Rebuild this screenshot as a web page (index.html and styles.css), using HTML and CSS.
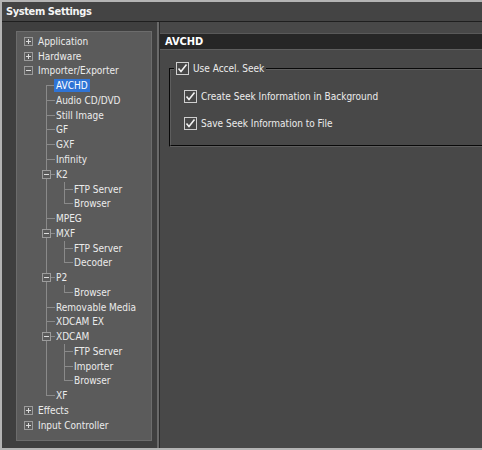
FILE: index.html
```html
<!DOCTYPE html>
<html>
<head>
<meta charset="utf-8">
<link rel="stylesheet" href="styles.css">
</head>
<body>
<div class="window">
  <div class="titlebar">System Settings</div>
  <div class="main">
    <div class="sidebar">
      <div class="tree">
        <div class="row"><span class="c"><span class="exp plus"></span></span><span class="lbl">Application</span></div>
        <div class="row"><span class="c"><span class="exp plus"></span></span><span class="lbl">Hardware</span></div>
        <div class="row"><span class="c"><span class="exp"></span></span><span class="lbl">Importer/Exporter</span></div>
        <div class="row"><span class="c"></span><span class="c f"></span><span class="lbl sel">AVCHD</span></div>
        <div class="row"><span class="c"></span><span class="c t"></span><span class="lbl">Audio CD/DVD</span></div>
        <div class="row"><span class="c"></span><span class="c t"></span><span class="lbl">Still Image</span></div>
        <div class="row"><span class="c"></span><span class="c t"></span><span class="lbl">GF</span></div>
        <div class="row"><span class="c"></span><span class="c t"></span><span class="lbl">GXF</span></div>
        <div class="row"><span class="c"></span><span class="c t"></span><span class="lbl">Infinity</span></div>
        <div class="row"><span class="c"></span><span class="c t"><span class="exp"></span></span><span class="lbl">K2</span></div>
        <div class="row"><span class="c"></span><span class="c v"></span><span class="c t"></span><span class="lbl">FTP Server</span></div>
        <div class="row"><span class="c"></span><span class="c v"></span><span class="c l"></span><span class="lbl">Browser</span></div>
        <div class="row"><span class="c"></span><span class="c t"></span><span class="lbl">MPEG</span></div>
        <div class="row"><span class="c"></span><span class="c t"><span class="exp"></span></span><span class="lbl">MXF</span></div>
        <div class="row"><span class="c"></span><span class="c v"></span><span class="c t"></span><span class="lbl">FTP Server</span></div>
        <div class="row"><span class="c"></span><span class="c v"></span><span class="c l"></span><span class="lbl">Decoder</span></div>
        <div class="row"><span class="c"></span><span class="c t"><span class="exp"></span></span><span class="lbl">P2</span></div>
        <div class="row"><span class="c"></span><span class="c v"></span><span class="c l"></span><span class="lbl">Browser</span></div>
        <div class="row"><span class="c"></span><span class="c t"></span><span class="lbl">Removable Media</span></div>
        <div class="row"><span class="c"></span><span class="c t"></span><span class="lbl">XDCAM EX</span></div>
        <div class="row"><span class="c"></span><span class="c t"><span class="exp"></span></span><span class="lbl">XDCAM</span></div>
        <div class="row"><span class="c"></span><span class="c v"></span><span class="c t"></span><span class="lbl">FTP Server</span></div>
        <div class="row"><span class="c"></span><span class="c v"></span><span class="c t"></span><span class="lbl">Importer</span></div>
        <div class="row"><span class="c"></span><span class="c v"></span><span class="c l"></span><span class="lbl">Browser</span></div>
        <div class="row"><span class="c"></span><span class="c l"></span><span class="lbl">XF</span></div>
        <div class="row"><span class="c"><span class="exp plus"></span></span><span class="lbl">Effects</span></div>
        <div class="row"><span class="c"><span class="exp plus"></span></span><span class="lbl">Input Controller</span></div>
      </div>
    </div>
    <div class="splitter"></div>
    <div class="content">
      <div class="header">AVCHD</div>
      <fieldset class="group">
        <legend class="legend">
          <span class="check"><span class="cb"><svg width="11" height="11" viewBox="0 0 11 11"><polyline points="1.5,5.5 4,8.5 9.5,1.5" fill="none" stroke="#f2f2f2" stroke-width="1.6"/></svg></span>Use Accel. Seek</span>
        </legend>
        <div class="group-body">
          <div class="check"><span class="cb"><svg width="11" height="11" viewBox="0 0 11 11"><polyline points="1.5,5.5 4,8.5 9.5,1.5" fill="none" stroke="#f2f2f2" stroke-width="1.6"/></svg></span>Create Seek Information in Background</div>
          <div class="check"><span class="cb"><svg width="11" height="11" viewBox="0 0 11 11"><polyline points="1.5,5.5 4,8.5 9.5,1.5" fill="none" stroke="#f2f2f2" stroke-width="1.6"/></svg></span>Save Seek Information to File</div>
        </div>
      </fieldset>
    </div>
  </div>
</div>
</body>
</html>
```

FILE: styles.css
```css
html, body {
  margin: 0;
  padding: 0;
}
body {
  width: 482px;
  height: 450px;
  overflow: hidden;
  background: #b4b4b4;
  font-family: "DejaVu Sans Condensed", "DejaVu Sans", sans-serif;
  font-size: 10px;
  color: #e8e8e8;
}
.window {
  margin: 2px 0 0 2px;
  height: 446px;
  display: flex;
  flex-direction: column;
  background: #474747;
}
.titlebar {
  height: 19px;
  flex: none;
  background: #444444;
  border-bottom: 1px solid #1f1f1f;
  color: #f4f4f4;
  font-weight: bold;
  font-size: 11px;
  letter-spacing: -0.4px;
  line-height: 19px;
  padding-left: 4px;
}
.main {
  flex: 1;
  display: flex;
  min-height: 0;
}
.sidebar {
  width: 155px;
  flex: none;
  box-sizing: border-box;
  background: #3f3f3f;
  padding: 9px 5px 7px 14px;
}
.tree {
  height: 100%;
  box-sizing: border-box;
  border: 1px solid #6c6c6c;
  background: #5b5b5b;
  padding: 2px 0 0 2px;
  overflow: hidden;
}
.row {
  display: flex;
  align-items: center;
  height: 14.77px;
  white-space: nowrap;
}
.c {
  width: 18px;
  height: 100%;
  flex: none;
  display: flex;
  align-items: center;
}
.v {
  background: linear-gradient(#8a8a8a, #8a8a8a) no-repeat 9px 0 / 1px 100%;
}
.t {
  background:
    linear-gradient(#8a8a8a, #8a8a8a) no-repeat 9px 0 / 1px 100%,
    linear-gradient(#8a8a8a, #8a8a8a) no-repeat 9px 50% / 9px 1px;
}
.l {
  background:
    linear-gradient(#8a8a8a, #8a8a8a) no-repeat 9px 0 / 1px 50%,
    linear-gradient(#8a8a8a, #8a8a8a) no-repeat 9px 50% / 9px 1px;
}
.f {
  background:
    linear-gradient(#8a8a8a, #8a8a8a) no-repeat 9px 100% / 1px 50%,
    linear-gradient(#8a8a8a, #8a8a8a) no-repeat 9px 50% / 9px 1px;
}
.exp {
  width: 9px;
  height: 9px;
  box-sizing: border-box;
  margin-left: 5px;
  border: 1px solid #9c9c9c;
  background:
    linear-gradient(#dcdcdc, #dcdcdc) no-repeat 1px 3px / 5px 1px,
    #5b5b5b;
}
.exp.plus {
  background:
    linear-gradient(#dcdcdc, #dcdcdc) no-repeat 1px 3px / 5px 1px,
    linear-gradient(#dcdcdc, #dcdcdc) no-repeat 3px 1px / 1px 5px,
    #5b5b5b;
}
.lbl {
  margin-left: -1px;
  padding: 0 2px;
  line-height: 13px;
  color: #ececec;
}
.lbl.sel {
  background: #2f74d6;
  color: #ffffff;
}
.splitter {
  width: 2px;
  flex: none;
  background: #6a6a6a;
  border-right: 1px solid #2c2c2c;
}
.content {
  flex: 1;
  min-width: 0;
  overflow: hidden;
  background: #484848;
  padding-top: 11px;
}
.header {
  height: 15px;
  border-top: 1px solid #595959;
  border-bottom: 1px solid #5e5e5e;
  background: #262626;
  color: #ffffff;
  font-weight: bold;
  font-size: 11px;
  line-height: 15px;
  padding-left: 5px;
}
.group {
  margin: 12px -40px 0 9px;
  padding: 0;
  border: 2px groove #5e5e5e;
  min-width: 0;
}
.legend {
  margin-left: 3px;
  padding: 0 2px;
}
.group-body {
  display: flex;
  flex-direction: column;
  gap: 14px;
  padding: 15px 0 15px 13px;
}
.check {
  display: flex;
  align-items: center;
  gap: 4px;
  height: 13px;
  color: #ececec;
  white-space: nowrap;
}
.cb {
  width: 13px;
  height: 13px;
  box-sizing: border-box;
  flex: none;
  border: 1px solid #cfcfcf;
  background: #474747;
  display: flex;
}
.cb svg {
  display: block;
}
```
